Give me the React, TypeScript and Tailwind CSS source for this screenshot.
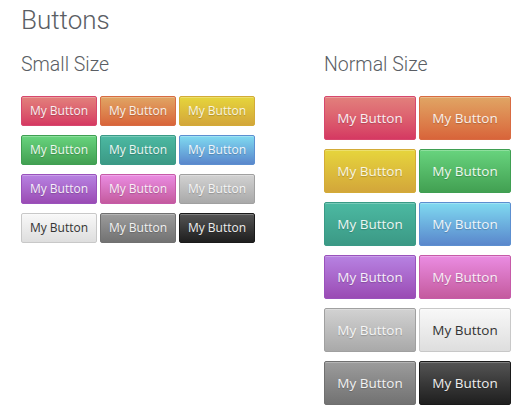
const tones = [
  "border-[#d7476d] bg-gradient-to-b from-[#e2807c] to-[#d53862] text-[#fbeef0]",
  "border-[#d86b42] bg-gradient-to-b from-[#e0a564] to-[#d8643a] text-[#fbf0e8]",
  "border-[#d3ab37] bg-gradient-to-b from-[#e6d53c] to-[#d3a63a] text-[#fbf6e0]",
  "border-[#3f9f52] bg-gradient-to-b from-[#68d47e] to-[#42a052] text-[#ecf9ee]",
  "border-[#3a9a86] bg-gradient-to-b from-[#4cb9a2] to-[#3b9985] text-[#ebf7f4]",
  "border-[#5c8fd0] bg-gradient-to-b from-[#80daf0] to-[#5a87cc] text-[#eef6fc]",
  "border-[#9a52bc] bg-gradient-to-b from-[#b782e2] to-[#9a4bb4] text-[#f6eefb]",
  "border-[#c65aa8] bg-gradient-to-b from-[#ea8ce2] to-[#c45a9e] text-[#fbeef8]",
  "border-[#a0a0a0] bg-gradient-to-b from-[#d2d2d2] to-[#a9a9a9] text-[#f6f6f6]",
  "border-[#c8c8c8] bg-gradient-to-b from-[#f8f8f8] to-[#dedede] text-[#333] [text-shadow:none]",
  "border-[#707070] bg-gradient-to-b from-[#9c9c9c] to-[#727272] text-[#f2f2f2]",
  "border-[#1a1a1a] bg-gradient-to-b from-[#555555] to-[#1f1f1f] text-[#eeeeee]",
]

function Btn({ tone, size }: { tone: string; size: "sm" | "md" }) {
  const dims =
    size === "sm"
      ? "h-[30px] w-[76px] text-[12px]"
      : "h-[44px] w-[92px] text-[13.5px]"
  return (
    <button
      className={`${dims} ${tone} flex items-center justify-center rounded-[2px] border font-['Open_Sans',sans-serif] [text-shadow:0_1px_1px_rgba(0,0,0,0.2)] shadow-[inset_0_1px_0_rgba(255,255,255,0.25)]`}
    >
      My Button
    </button>
  )
}

export default function App() {
  return (
    <div className="h-[420px] w-[530px] bg-white px-[21px] pt-[4px] font-['Roboto',sans-serif] text-[#5a5e64]">
      <h1 className="text-[26px] font-light leading-[32px]">Buttons</h1>
      <div className="mt-[16px] flex">
        <div className="w-[303px] shrink-0">
          <h2 className="text-[19.5px] font-light leading-[26px]">Small Size</h2>
          <div className="mt-[18px] grid grid-cols-[repeat(3,76px)] gap-x-[3px] gap-y-[9px]">
            {tones.map((t, i) => (
              <Btn key={i} tone={t} size="sm" />
            ))}
          </div>
        </div>
        <div className="shrink-0">
          <h2 className="text-[19.5px] font-light leading-[26px]">Normal Size</h2>
          <div className="mt-[18px] grid grid-cols-[repeat(2,92px)] gap-x-[3px] gap-y-[9px]">
            {tones.map((t, i) => (
              <Btn key={i} tone={t} size="md" />
            ))}
          </div>
        </div>
      </div>
    </div>
  )
}
